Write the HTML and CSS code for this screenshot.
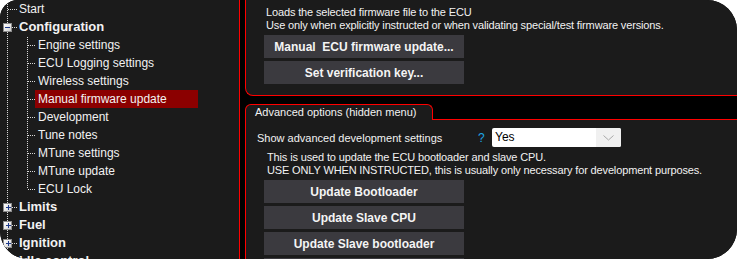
FILE: index.html
```html
<!DOCTYPE html>
<html>
<head>
<meta charset="utf-8">
<link rel="stylesheet" href="styles.css">
</head>
<body>
<div class="frame">
  <nav class="tree">
    <div class="rows">
      <div class="row root"><span class="nobox"></span><span class="hl hl-long"></span><span class="label">Start</span></div>
      <div class="row root"><span class="box minus"><i class="h"></i></span><span class="hl"></span><span class="label bold">Configuration</span></div>
      <div class="children">
        <div class="row child"><span class="hl"></span><span class="label">Engine settings</span></div>
        <div class="row child"><span class="hl"></span><span class="label">ECU Logging settings</span></div>
        <div class="row child"><span class="hl"></span><span class="label">Wireless settings</span></div>
        <div class="row child"><span class="hl"></span><span class="label sel">Manual firmware update</span></div>
        <div class="row child"><span class="hl"></span><span class="label">Development</span></div>
        <div class="row child"><span class="hl"></span><span class="label">Tune notes</span></div>
        <div class="row child"><span class="hl"></span><span class="label">MTune settings</span></div>
        <div class="row child"><span class="hl"></span><span class="label">MTune update</span></div>
        <div class="row child"><span class="hl"></span><span class="label">ECU Lock</span></div>
      </div>
      <div class="row root"><span class="box plus"><i class="h"></i><i class="v"></i></span><span class="hl"></span><span class="label bold">Limits</span></div>
      <div class="row root"><span class="box plus"><i class="h"></i><i class="v"></i></span><span class="hl"></span><span class="label bold">Fuel</span></div>
      <div class="row root"><span class="box plus"><i class="h"></i><i class="v"></i></span><span class="hl"></span><span class="label bold">Ignition</span></div>
      <div class="row root"><span class="box plus"><i class="h"></i><i class="v"></i></span><span class="hl"></span><span class="label bold">Idle control</span></div>
    </div>
  </nav>
  <main class="main">
    <section class="group top">
      <p class="desc">Loads the selected firmware file to the ECU<br>Use only when explicitly instructed or when validating special/test firmware versions.</p>
      <div class="buttons">
        <button class="btn">Manual&nbsp; ECU firmware update...</button>
        <button class="btn">Set verification key...</button>
      </div>
    </section>
    <section class="tabgroup">
      <div class="tabrow">
        <div class="tab">Advanced options (hidden menu)</div>
        <div class="tabfill"></div>
      </div>
      <div class="tabbody">
        <div class="setting">
          <span class="setting-label">Show advanced development settings</span>
          <span class="help">?</span>
          <div class="select">
            <span class="select-value">Yes</span>
            <span class="select-arrow">
              <svg width="11" height="6" viewBox="0 0 11 6"><path d="M0.5 0.5 L5.5 5 L10.5 0.5" fill="none" stroke="#a8a8a8" stroke-width="1"/></svg>
            </span>
          </div>
        </div>
        <p class="desc desc-adv">This is used to update the ECU bootloader and slave CPU.<br>USE ONLY WHEN INSTRUCTED, this is usually only necessary for development purposes.</p>
        <div class="buttons buttons-adv">
          <button class="btn">Update Bootloader</button>
          <button class="btn">Update Slave CPU</button>
          <button class="btn">Update Slave bootloader</button>
          <button class="btn">Update Slave firmware</button>
        </div>
      </div>
    </section>
  </main>
</div>
</body>
</html>
```

FILE: styles.css
```css
html, body {
  margin: 0;
  padding: 0;
  background: #ffffff;
}

.frame {
  width: 737px;
  height: 259px;
  display: flex;
  background: #000000;
  border-radius: 18px 30px 30px 28px;
  overflow: hidden;
  font-family: "Liberation Sans", Arial, sans-serif;
  color: #f2f2f2;
}

/* ---------- tree ---------- */
.tree {
  width: 239px;
  flex: none;
  border-right: 1px solid #ff0000;
  background:
    repeating-linear-gradient(to bottom, #d8d8d8 0 1px, transparent 1px 2px) 7px 0 / 1px 100% no-repeat,
    #1b1b1b;
  overflow: hidden;
}

.rows {
  margin-top: 0;
}

.row {
  height: 18px;
  display: flex;
  align-items: center;
  font-size: 12px;
  white-space: nowrap;
}

.root {
  padding-left: 3px;
}

.child {
  padding-left: 28px;
}

.nobox {
  width: 5px;
  flex: none;
}

.box {
  width: 9px;
  height: 9px;
  box-sizing: border-box;
  flex: none;
  border: 1px solid #8c8c8c;
  background: linear-gradient(135deg, #ffffff 0%, #e6e6e6 60%, #c8c8c8 100%);
  display: flex;
  align-items: center;
  justify-content: center;
}

.box .h {
  display: block;
  width: 5px;
  height: 1px;
  background: #1e3a8a;
}

.box .v {
  display: block;
  width: 1px;
  height: 5px;
  background: #1e3a8a;
  margin-left: -3px;
}

.hl {
  width: 6px;
  height: 1px;
  flex: none;
  margin-right: 1px;
  background: repeating-linear-gradient(to right, #d8d8d8 0 1px, transparent 1px 2px);
}

.hl-long {
  width: 10px;
}

.child .hl {
  width: 7px;
  margin-right: 0;
}

.label {
  display: block;
  line-height: 18px;
}

.child .label {
  padding: 0 3px;
}

.label.bold {
  font-weight: bold;
  font-size: 13px;
}

.label.sel {
  width: 163px;
  box-sizing: border-box;
  background: #8b0000;
}

.children {
  background: repeating-linear-gradient(to bottom, #d8d8d8 0 1px, transparent 1px 2px) 27px 1px / 1px calc(100% - 10px) no-repeat;
}

/* ---------- main ---------- */
.main {
  flex: 1;
  min-width: 0;
  display: flex;
  flex-direction: column;
  gap: 8px;
  padding-left: 5px;
}

.desc {
  margin: 0;
  font-size: 11px;
  line-height: 13px;
  letter-spacing: -0.14px;
  white-space: nowrap;
}

.group.top {
  height: 96px;
  box-sizing: border-box;
  flex: none;
  border-left: 1px solid #ff0000;
  border-bottom: 1px solid #ff0000;
  border-bottom-left-radius: 8px;
  background: #1b1b1b;
  padding: 6px 0 0 20px;
}

.buttons {
  display: flex;
  flex-direction: column;
  gap: 3px;
  margin-top: 3px;
  margin-left: -2px;
}

.btn {
  width: 200px;
  height: 23px;
  padding: 0;
  border: none;
  background: #3b3a3f;
  color: #f4f4f4;
  font-family: "Liberation Sans", Arial, sans-serif;
  font-weight: bold;
  font-size: 12px;
}

.tabgroup {
  flex: 1;
  display: flex;
  flex-direction: column;
  min-height: 0;
}

.tabrow {
  display: flex;
  height: 16px;
  flex: none;
}

.tab {
  width: 188px;
  box-sizing: border-box;
  border: 1px solid #ff0000;
  border-bottom: none;
  border-radius: 6px 6px 0 0;
  background: #1b1b1b;
  padding-left: 9px;
  font-size: 11px;
  line-height: 15px;
  white-space: nowrap;
}

.tabfill {
  flex: 1;
  border-bottom: 1px solid #ff0000;
}

.tabbody {
  flex: 1;
  border-left: 1px solid #ff0000;
  background: #1b1b1b;
  padding: 8px 0 0 11px;
}

.setting {
  display: flex;
  align-items: center;
  height: 19px;
  font-size: 11px;
}

.setting-label {
  width: 221px;
  flex: none;
  white-space: nowrap;
}

.help {
  width: 14px;
  flex: none;
  color: #1ea7e8;
  font-size: 12px;
}

.select {
  width: 129px;
  height: 19px;
  display: flex;
  background: #ffffff;
  border-radius: 2px;
  overflow: hidden;
}

.select-value {
  flex: 1;
  color: #000000;
  font-size: 12px;
  line-height: 19px;
  padding-left: 3px;
}

.select-arrow {
  width: 25px;
  background: #f0f0f0;
  display: flex;
  align-items: center;
  justify-content: center;
}

.desc-adv {
  margin-top: 4px;
  margin-left: 10px;
}

.buttons-adv {
  margin-top: 3px;
  margin-left: 7px;
}
```
